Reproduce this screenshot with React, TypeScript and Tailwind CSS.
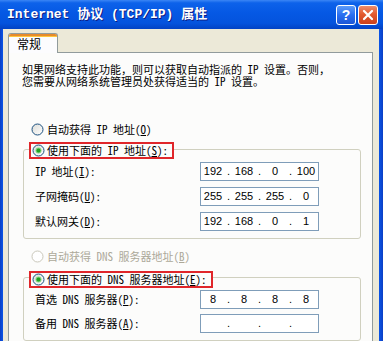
import React, { Fragment } from "react";

function Radio({ checked = false, disabled = false }: { checked?: boolean; disabled?: boolean }) {
  return (
    <svg width="13" height="13" viewBox="0 0 13 13" className="shrink-0">
      <defs>
        <linearGradient id="rg" x1="0" y1="0" x2="1" y2="1">
          <stop offset="0" stopColor="#dcdcd7" />
          <stop offset="1" stopColor="#ffffff" />
        </linearGradient>
      </defs>
      <circle
        cx="6.5"
        cy="6.5"
        r="5.5"
        fill={disabled ? "#ffffff" : "url(#rg)"}
        stroke={disabled ? "#cac8bb" : "#1c5180"}
        strokeWidth="1"
      />
      {checked && (
        <>
          <circle cx="6.5" cy="6.5" r="3" fill="#7fd67f" />
          <circle cx="6.5" cy="6.5" r="2" fill="#21a121" />
        </>
      )}
    </svg>
  );
}

function IpBox({ parts }: { parts: string[] }) {
  return (
    <div className="w-[119px] h-[19px] border border-[#7f9db9] bg-white flex items-center font-['Liberation_Sans',sans-serif] text-[11px] text-black shrink-0">
      {parts.map((p, i) => (
        <Fragment key={i}>
          {i > 0 && <span className="w-[7px] text-center">.</span>}
          <span className="w-[24px] text-center">{p}</span>
        </Fragment>
      ))}
    </div>
  );
}

function Row({ label, k, after = ":", parts }: { label: string; k: string; after?: string; parts: string[] }) {
  return (
    <div className="flex items-center h-[19px]">
      <div className="w-[165px] ml-[11px] shrink-0 leading-none">
        {label}(<u className="underline-offset-1">{k}</u>){after}
      </div>
      <IpBox parts={parts} />
    </div>
  );
}

export default function App() {
  return (
    <div className="w-[383px] h-[341px] overflow-hidden flex flex-col bg-[#0a4fdc] font-['Noto_Sans_Mono_CJK_SC','Noto_Sans_CJK_SC',sans-serif] text-[11px] text-black">
      {/* Title bar */}
      <div className="h-[29px] shrink-0 flex items-center pl-[7px] pr-[5px] bg-[linear-gradient(to_bottom,#3b86f5_0%,#0d62ea_10%,#0558e4_45%,#0453dd_80%,#0242c4_100%)]">
        <div className="flex-1 text-white font-bold text-[13px] leading-none font-['Liberation_Mono','Noto_Sans_CJK_SC',monospace] [text-shadow:1px_1px_#0c1e86] whitespace-nowrap">
          Internet 协议 (TCP/IP) 属性
        </div>
        <div className="flex gap-[2px]">
          <div className="w-[20px] h-[20px] rounded-[3px] border border-white bg-[linear-gradient(to_bottom,#5c9cf9,#2a6ef0_50%,#1c56d6)] flex items-center justify-center text-white font-bold text-[14px] font-['Liberation_Sans',sans-serif] leading-none">
            ?
          </div>
          <div className="w-[20px] h-[20px] rounded-[3px] border border-white bg-[linear-gradient(to_bottom,#ee8d6c,#e35a2f_45%,#c9401c)] flex items-center justify-center">
            <svg width="12" height="12" viewBox="0 0 12 12">
              <path d="M2 2 L10 10 M10 2 L2 10" stroke="#ffffff" strokeWidth="2.2" strokeLinecap="round" />
            </svg>
          </div>
        </div>
      </div>

      {/* Body with frame */}
      <div className="flex-1 flex">
        <div className="w-[3px] shrink-0 bg-[linear-gradient(to_right,#0b3fc4,#0a55e8)]" />
        <div className="flex-1 bg-[#ece9d8] pt-[4px] pl-[5px]">
          {/* Tab */}
          <div className="relative z-10 w-[50px] h-[20px] -mb-px bg-[#fcfcfe] border border-b-0 border-[#919b9c] rounded-t-[3px] overflow-hidden">
            <div className="h-[2px] bg-[#e68b2c]" />
            <div className="h-[1px] bg-[#ffc73c]" />
            <div className="pl-[8px] text-[12px] leading-[14px]">常规</div>
          </div>
          {/* Panel */}
          <div className="w-[365px] h-[400px] border border-[#919b9c] bg-[#fcfcfb] flex flex-col">
            <div className="pt-[10px] pl-[13px] whitespace-nowrap">
              <div className="h-[12px] leading-[12px]">如果网络支持此功能，则可以获取自动指派的 IP 设置。否则，</div>
              <div className="h-[12px] leading-[12px]">您需要从网络系统管理员处获得适当的 IP 设置。</div>
            </div>

            <div className="mt-[34px] ml-[22px] h-[16px] flex items-center gap-[3px] whitespace-nowrap">
              <Radio />
              <span>
                自动获得 IP 地址(<u>O</u>)
              </span>
            </div>

            <div className="relative z-10 mt-[5px] ml-[20px] w-[145px] h-[17px] border-2 border-[#e0262a] bg-[#fcfcfb] flex items-center gap-[2px] pl-[1px] whitespace-nowrap">
              <Radio checked />
              <span>
                使用下面的 IP 地址(<u>S</u>):
              </span>
            </div>

            <div className="-mt-[10px] ml-[14px] w-[338px] border border-[#d0d0bf] rounded-[3px] pt-[12px] pb-[7px] flex flex-col gap-[6px]">
              <Row label="IP 地址" k="I" parts={["192", "168", "0", "100"]} />
              <Row label="子网掩码" k="U" parts={["255", "255", "255", "0"]} />
              <Row label="默认网关" k="D" parts={["192", "168", "0", "1"]} />
            </div>

            <div className="mt-[9px] ml-[22px] h-[16px] flex items-center gap-[3px] whitespace-nowrap text-[#aca899]">
              <Radio disabled />
              <span>
                自动获得 DNS 服务器地址(<u>B</u>)
              </span>
            </div>

            <div className="relative z-10 mt-[7px] ml-[20px] w-[184px] h-[17px] border-2 border-[#e0262a] bg-[#fcfcfb] flex items-center gap-[2px] pl-[1px] whitespace-nowrap">
              <Radio checked />
              <span>
                使用下面的 DNS 服务器地址(<u>E</u>):
              </span>
            </div>

            <div className="-mt-[11px] ml-[14px] w-[338px] border border-[#d0d0bf] rounded-[3px] pt-[12px] pb-[7px] flex flex-col gap-[5px]">
              <Row label="首选 DNS 服务器" k="P" parts={["8", "8", "8", "8"]} />
              <Row label="备用 DNS 服务器" k="A" parts={["", "", "", ""]} />
            </div>
          </div>
        </div>
        <div className="w-[4px] shrink-0 bg-[linear-gradient(to_right,#0a55e8,#0b3fc4)]" />
      </div>
    </div>
  );
}
